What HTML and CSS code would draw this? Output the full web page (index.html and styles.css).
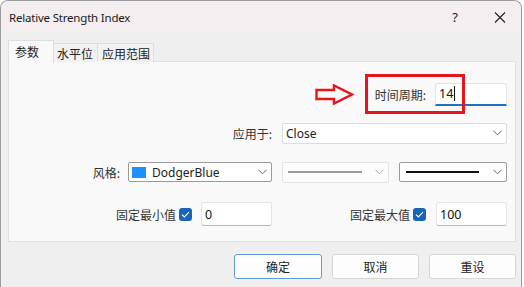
FILE: index.html
```html
<!DOCTYPE html>
<html lang="zh">
<head>
<meta charset="utf-8">
<link rel="stylesheet" href="styles.css">
</head>
<body>
<div class="window">
  <header class="titlebar">
    <span class="title">Relative Strength Index</span>
    <span class="help">?</span>
    <svg class="close" width="12" height="12" viewBox="0 0 12 12"><path d="M1 1.5 L11 11.5 M11 1.5 L1 11.5" stroke="#222" stroke-width="1.1" fill="none"/></svg>
  </header>
  <main class="content">
    <nav class="tabs">
      <div class="tab active">参数</div>
      <div class="tab">水平位</div>
      <div class="tab">应用范围</div>
    </nav>
    <section class="panel">
      <div class="row row-period">
        <span class="label">时间周期:</span>
        <div class="field focused">14<span class="caret"></span></div>
      </div>
      <div class="row row-apply">
        <span class="label">应用于:</span>
        <div class="select wide"><span>Close</span><svg class="chev" width="9" height="6" viewBox="0 0 9 6"><path d="M0.5 0.8 L4.5 4.8 L8.5 0.8" stroke="#666" stroke-width="1" fill="none"/></svg></div>
      </div>
      <div class="row row-style">
        <span class="label">风格:</span>
        <div class="select color dark"><span class="swatch"></span><span>DodgerBlue</span><svg class="chev" width="9" height="6" viewBox="0 0 9 6"><path d="M0.5 0.8 L4.5 4.8 L8.5 0.8" stroke="#666" stroke-width="1" fill="none"/></svg></div>
        <div class="select line disabled"><span class="stroke gray"></span><svg class="chev" width="9" height="6" viewBox="0 0 9 6"><path d="M0.5 0.8 L4.5 4.8 L8.5 0.8" stroke="#aaa" stroke-width="1" fill="none"/></svg></div>
        <div class="select line dark"><span class="stroke black"></span><svg class="chev" width="9" height="6" viewBox="0 0 9 6"><path d="M0.5 0.8 L4.5 4.8 L8.5 0.8" stroke="#666" stroke-width="1" fill="none"/></svg></div>
      </div>
      <div class="row row-limits">
        <div class="group">
          <span class="label">固定最小值</span>
          <span class="check"><svg width="9" height="7" viewBox="0 0 9 7"><path d="M1 3.6 L3.4 6 L8 1.2" stroke="#fff" stroke-width="1.1" fill="none"/></svg></span>
          <div class="field small">0</div>
        </div>
        <div class="group">
          <span class="label">固定最大值</span>
          <span class="check"><svg width="9" height="7" viewBox="0 0 9 7"><path d="M1 3.6 L3.4 6 L8 1.2" stroke="#fff" stroke-width="1.1" fill="none"/></svg></span>
          <div class="field small">100</div>
        </div>
      </div>
      <svg class="arrow" width="40" height="22" viewBox="0 0 40 22"><path d="M1.5 6 L19 6 L19 1.5 L37 10.5 L19 19.5 L19 15 L1.5 15 Z" stroke="#e8141c" stroke-width="2.4" fill="none" stroke-linejoin="miter"/></svg>
      <div class="highlight"></div>
    </section>
    <footer class="buttons">
      <button class="btn default">确定</button>
      <button class="btn">取消</button>
      <button class="btn">重设</button>
    </footer>
  </main>
</div>
</body>
</html>
```
FILE: styles.css
```css
* { box-sizing: border-box; }
html, body { margin: 0; padding: 0; background: #ffffff; }
body {
  font-family: "Noto Sans", "Noto Sans CJK SC", sans-serif;
  font-size: 12px;
  color: #1f1f1f;
}
.window {
  width: 522px;
  height: 287px;
  border: 1px solid #9c9c9c;
  border-bottom: none;
  border-radius: 8px 8px 0 0;
  background: #efefef;
  overflow: hidden;
}
.titlebar {
  height: 31px;
  background: #f4eef1;
  display: flex;
  align-items: center;
  padding-left: 8px;
}
.title { font-size: 11.5px; letter-spacing: -0.2px; color: #1a1a1a; flex: 1; margin-top: 1px; }
.help { font-size: 13px; color: #222; margin-right: 36px; }
.close { margin-right: 15px; }
.content { padding: 8px 5px 0 7px; }
.tabs { display: flex; align-items: flex-end; height: 22px; position: relative; z-index: 2; }
.tab {
  height: 19px;
  padding: 0 0 0 3px;
  border: 1px solid #dedede;
  border-bottom: none;
  background: #f2f2f2;
  margin-left: -1px;
  display: flex;
  align-items: center;
  white-space: nowrap;
  font-family: "Noto Sans CJK SC", sans-serif;
  color: #222;
}
.tab:nth-child(2) { width: 45px; }
.tab:nth-child(3) { width: 57px; padding-left: 4px; }
.tab.active {
  width: 46px;
  height: 23px;
  margin-left: 0;
  margin-bottom: -1px;
  background: #f9f9f9;
  padding: 0 0 2px 6px;
}
.panel {
  position: relative;
  height: 181px;
  background: #f9f9f9;
  border: 1px solid #e0e0e0;
  margin-top: -1px;
  padding: 0 8px 0 8px;
}
.row {
  height: 24px;
  display: flex;
  align-items: center;
  justify-content: flex-end;
}
.label { font-family: "Noto Sans CJK SC", sans-serif; color: #333; }
.row-period { margin-top: 20px; gap: 9px; }
.row-apply { margin-top: 15px; gap: 10px; }
.row-style { margin-top: 15px; gap: 10px; }
.row-style .label { margin-right: -2px; }
.row-limits { margin-top: 18px; gap: 78px; }
.group { display: flex; align-items: center; }
.field {
  height: 24px;
  background: #fff;
  border: 1px solid #e4e4e4;
  border-bottom-color: #b8b8b8;
  border-radius: 3px;
  display: flex;
  align-items: center;
  padding-left: 3px;
  font-size: 12.5px;
  color: #111;
}
.field.focused {
  width: 72px;
  height: 23px;
  border-bottom: 2px solid #1f6fc5;
  border-radius: 3px 3px 0 0;
}
.caret { width: 1px; height: 15px; background: #111; margin-left: 1px; }
.field.small { width: 71px; }
.group:first-child .field.small { margin-left: 9px; }
.group:last-child .field.small { margin-left: 10px; }
.check {
  width: 13px;
  height: 13px;
  margin-left: 3px;
  background: #1764b8;
  border-radius: 3px;
  display: flex;
  align-items: center;
  justify-content: center;
}
.select {
  height: 21px;
  background: #fff;
  border: 1px solid #dcdcdc;
  border-radius: 2px;
  display: flex;
  align-items: center;
  padding: 0 4px 0 3px;
  color: #222;
}
.select span:not(.swatch):not(.stroke) { flex: 1; }
.select.wide { width: 225px; }
.select.dark { border-color: #9a9a9a; height: 20px; }
.select.color { width: 144px; padding-left: 3px; }
.swatch { width: 14px; height: 11px; background: #1e90ff; margin-right: 6px; }
.select.line { width: 107px; padding-left: 5px; }
.select.line:last-child { width: 108px; padding-left: 6px; }
.select.disabled { border-color: #e2e2e2; background: #fcfcfc; }
.stroke { flex: 1; height: 1.5px; margin-right: 13px; }
.stroke.gray { background: #9a9a9a; margin-right: 13px; }
.stroke.black { background: #111; height: 2px; margin-right: 14px; }
.chev { flex: none; }
.arrow { position: absolute; left: 306px; top: 22px; }
.highlight {
  position: absolute;
  left: 356px;
  top: 12px;
  width: 100px;
  height: 40px;
  border: 3px solid #e8141c;
}
.buttons {
  display: flex;
  justify-content: flex-end;
  gap: 10px;
  margin-top: 12px;
  padding-right: 0;
}
.btn {
  width: 87px;
  height: 25px;
  background: #fdfdfd;
  border: 1px solid #d6d6d6;
  border-radius: 3px;
  font-family: "Noto Sans CJK SC", sans-serif;
  font-size: 12px;
  color: #222;
  padding: 0;
}
.btn.default { width: 88px; border-color: #5f9ad6; }
```
